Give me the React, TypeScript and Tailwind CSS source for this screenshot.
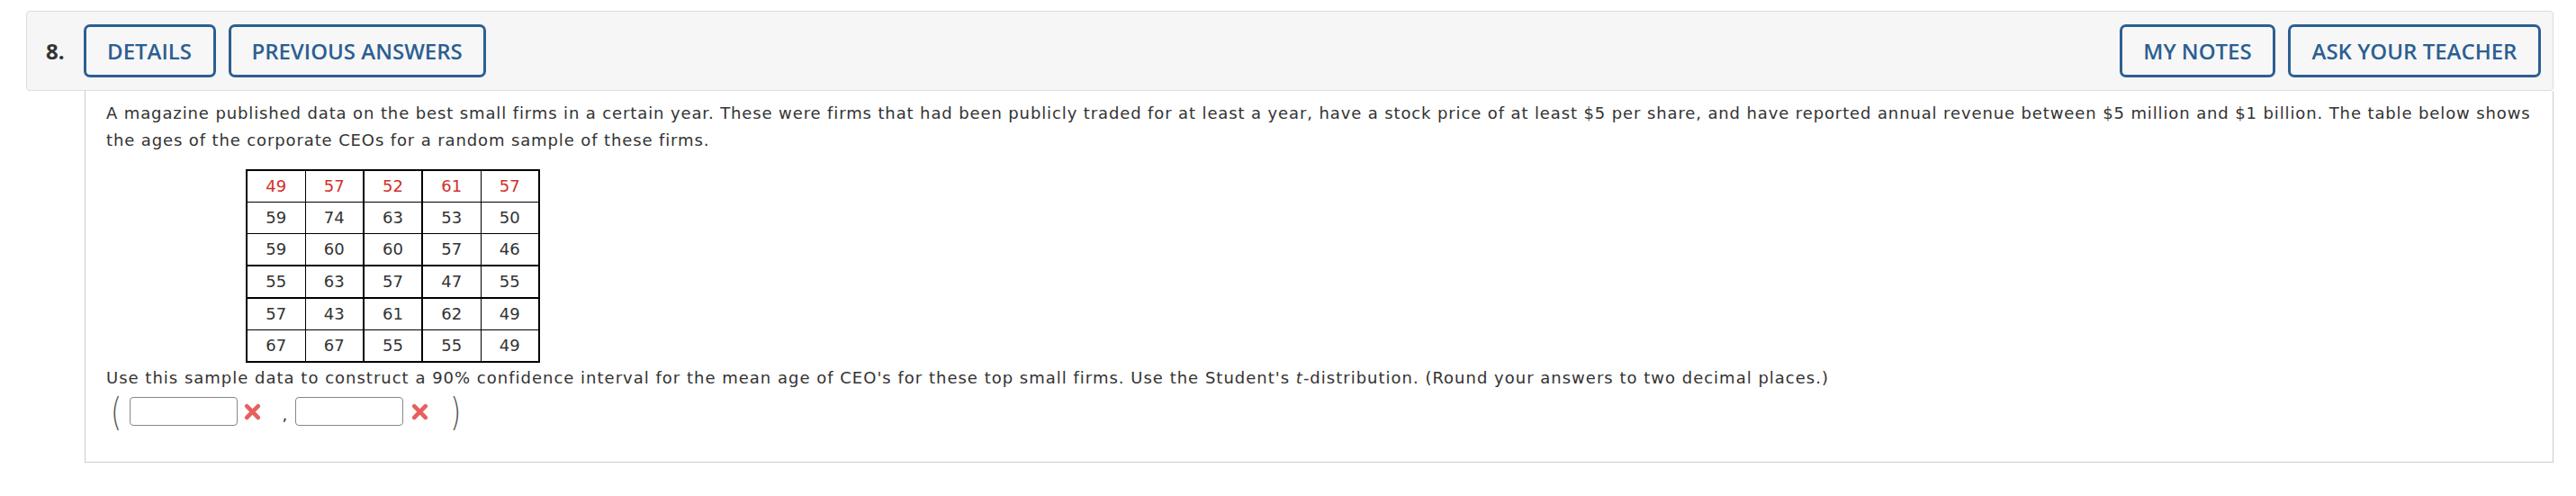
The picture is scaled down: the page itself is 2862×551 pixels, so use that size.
import React from "react";

const rows: number[][] = [
  [49, 57, 52, 61, 57],
  [59, 74, 63, 53, 50],
  [59, 60, 60, 57, 46],
  [55, 63, 57, 47, 55],
  [57, 43, 61, 62, 49],
  [67, 67, 55, 55, 49],
];

const font = { fontFamily: '"DejaVu Sans", Verdana, sans-serif' };

function HeaderButton({ label, width }: { label: string; width: string }) {
  return (
    <button
      className={`${width} h-[59px] border-[3px] border-[#2c5f92] rounded-[7px] bg-[#f7f7f7] text-[#2c5f92] text-[24px] font-semibold flex items-center justify-center`}
      style={{ fontFamily: '"Open Sans", sans-serif' }}
    >
      {label}
    </button>
  );
}

function RedX() {
  return (
    <svg width="21" height="21" viewBox="0 0 20 20" className="shrink-0">
      <path
        d="M4 4 L16 16 M16 4 L4 16"
        stroke="#e8605e"
        strokeWidth="4.5"
        strokeLinecap="round"
      />
    </svg>
  );
}

function AnswerBox() {
  return (
    <div className="w-[120px] h-[32px] border border-[#888] rounded-[4px] bg-white shrink-0" />
  );
}

export default function App() {
  return (
    <div className="bg-white w-[2862px] h-[551px] pl-[29px] pr-[25px] pt-[12px]">
      {/* top bar */}
      <div className="h-[89px] bg-[#f6f6f6] border border-[#dddddd] rounded-[4px] flex items-center pl-[21px] pr-[13px]">
        <span
          className="text-[24px] font-bold text-[#333] mr-[21px]"
          style={{ fontFamily: '"Open Sans", sans-serif' }}
        >
          8.
        </span>
        <div className="flex gap-[14px]">
          <HeaderButton label="DETAILS" width="w-[147px]" />
          <HeaderButton label="PREVIOUS ANSWERS" width="w-[286px]" />
        </div>
        <div className="flex gap-[14px] ml-auto">
          <HeaderButton label="MY NOTES" width="w-[173px]" />
          <HeaderButton label="ASK YOUR TEACHER" width="w-[281px]" />
        </div>
      </div>

      {/* question body */}
      <div
        className="ml-[65px] h-[413px] border-l border-r border-b border-[#cccccc] bg-white pl-[23px] pr-[6px] pt-[10px] text-[18px] leading-[30px] text-[#333]"
        style={font}
      >
        <p className="tracking-[0.88px]">
          A magazine published data on the best small firms in a certain year. These were firms that had been publicly
          traded for at least a year, have a stock price of at least $5 per share, and have reported annual revenue
          between $5 million and $1 billion. The table below shows the ages of the corporate CEOs for a random sample of
          these firms.
        </p>

        <table className="mt-[17px] ml-[155px] border-collapse border-2 border-black">
          <tbody>
            {rows.map((r, ri) => (
              <tr
                key={ri}
                className={ri === 3 || ri === 4 ? "border-t-2 border-black" : "border-t border-black"}
              >
                {r.map((v, ci) => (
                  <td
                    key={ci}
                    className={`w-[65px] h-[35px] p-0 text-center leading-[34px] ${
                      ci === 2 || ci === 3 ? "border-l-2" : "border-l"
                    } border-black ${ri === 0 ? "text-[#d3302a]" : "text-[#333]"}`}
                  >
                    {v}
                  </td>
                ))}
              </tr>
            ))}
          </tbody>
        </table>

        <p className="mt-[2px] tracking-[1px]">
          Use this sample data to construct a 90% confidence interval for the mean age of CEO's for these top small firms.
          Use the Student's <i>t</i>-distribution. (Round your answers to two decimal places.)
        </p>

        <div className="flex items-center h-[44px]">
          <span className="ml-[3px] text-[42px] leading-none text-[#555] font-extralight scale-x-75 relative top-[2px]">(</span>
          <div className="ml-[7px]">
            <AnswerBox />
          </div>
          <div className="ml-[6px]">
            <RedX />
          </div>
          <span className="ml-[22px] text-[18px] text-[#333] relative top-[4px]">,</span>
          <div className="ml-[9px]">
            <AnswerBox />
          </div>
          <div className="ml-[8px]">
            <RedX />
          </div>
          <span className="ml-[21px] text-[42px] leading-none text-[#555] font-extralight scale-x-75 relative top-[2px]">)</span>
        </div>
      </div>
    </div>
  );
}
